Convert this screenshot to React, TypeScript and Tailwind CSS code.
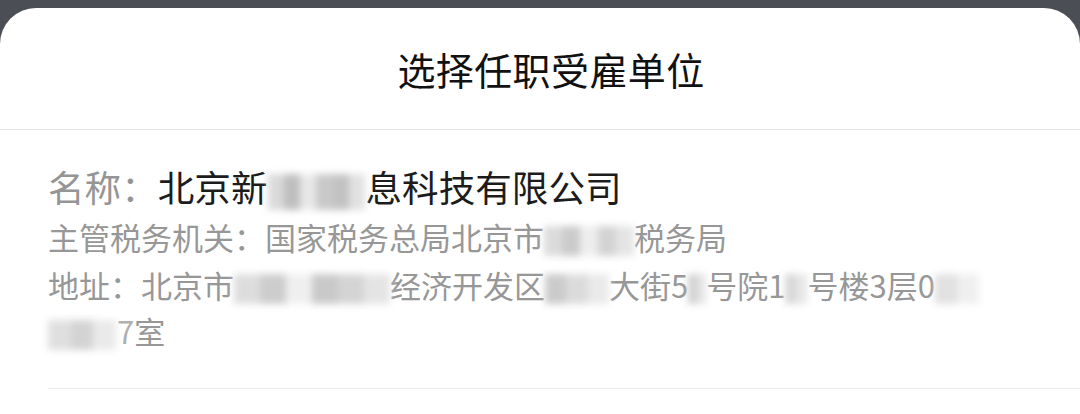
import React from 'react';

type MosaicProps = {
  className: string;
  cells: string[];
};

// pixelated, blurred patch used to hide parts of the text
const Mosaic = ({ className, cells }: MosaicProps) => (
  <span className={`inline-flex h-[30px] align-[-6px] overflow-visible ${className}`}>
    <span className="flex w-full h-full blur-[3.5px] opacity-90">
      {cells.map((c, i) => (
        <span key={i} className={`flex-1 h-full ${c}`} />
      ))}
    </span>
  </span>
);

const App = () => {
  return (
    <div className="w-[1080px] h-[414px] bg-[#4b4f55] pt-[8px] overflow-hidden font-['Noto_Sans_CJK_SC','Noto_Sans',sans-serif]">
      <div className="bg-white rounded-t-[36px] h-full">
        <div className="h-[122px] flex items-center justify-center pl-[22px] border-b border-[#e4e4e4]">
          <h1 className="text-[38px] leading-none text-[#111] tracking-[0.4px]">选择任职受雇单位</h1>
        </div>

        <div className="pl-[48px] pt-[32px]">
          <div className="pr-[48px] pb-[34px]">
            <p className="h-[50px] leading-[50px] text-[36.6px] whitespace-nowrap">
              <span className="text-[#959595]">名称：</span>
              <span className="text-[#1c1c1c]">北京新</span>
              <Mosaic
                className="w-[98px] h-[36px] align-[-8px]"
                cells={['bg-[#d6d6d6]', 'bg-[#b8b8b8]', 'bg-[#e6e6e6]', 'bg-[#c4c4c4]', 'bg-[#bcbcbc]', 'bg-[#dedede]']}
              />
              <span className="text-[#1c1c1c]">息科技有限公司</span>
            </p>

            <p className="h-[50px] leading-[50px] text-[31px] text-[#979797] whitespace-nowrap">
              主管税务机关：国家税务总局北京市
              <Mosaic
                className="w-[90px]"
                cells={['bg-[#d8d8d8]', 'bg-[#c6c6c6]', 'bg-[#ececec]', 'bg-[#cfcfcf]', 'bg-[#e2e2e2]']}
              />
              税务局
            </p>

            <p className="leading-[46px] text-[31px] text-[#979797] whitespace-nowrap">
              地址：北京市
              <Mosaic
                className="w-[156px]"
                cells={['bg-[#dadada]', 'bg-[#c8c8c8]', 'bg-[#eeeeee]', 'bg-[#c4c4c4]', 'bg-[#d0d0d0]', 'bg-[#e2e2e2]']}
              />
              经济开发区
              <Mosaic className="w-[64px]" cells={['bg-[#c6c6c6]', 'bg-[#d8d8d8]', 'bg-[#e8e8e8]']} />
              大街5
              <Mosaic className="w-[18px]" cells={['bg-[#cccccc]', 'bg-[#e2e2e2]']} />
              号院1
              <Mosaic className="w-[22px]" cells={['bg-[#d4d4d4]', 'bg-[#e4e4e4]']} />
              号楼3层0
              <Mosaic className="w-[44px]" cells={['bg-[#dedede]', 'bg-[#eeeeee]']} />
            </p>
            <p className="leading-[46px] text-[31px] text-[#979797] whitespace-nowrap">
              <Mosaic className="w-[68px]" cells={['bg-[#dcdcdc]', 'bg-[#cfcfcf]', 'bg-[#e8e8e8]']} />
              <span className="ml-[1px] text-[#b0b0b0]">7</span>室
            </p>
          </div>
          <div className="h-px bg-[#ececec]" />
        </div>
      </div>
    </div>
  );
};

export default App;
